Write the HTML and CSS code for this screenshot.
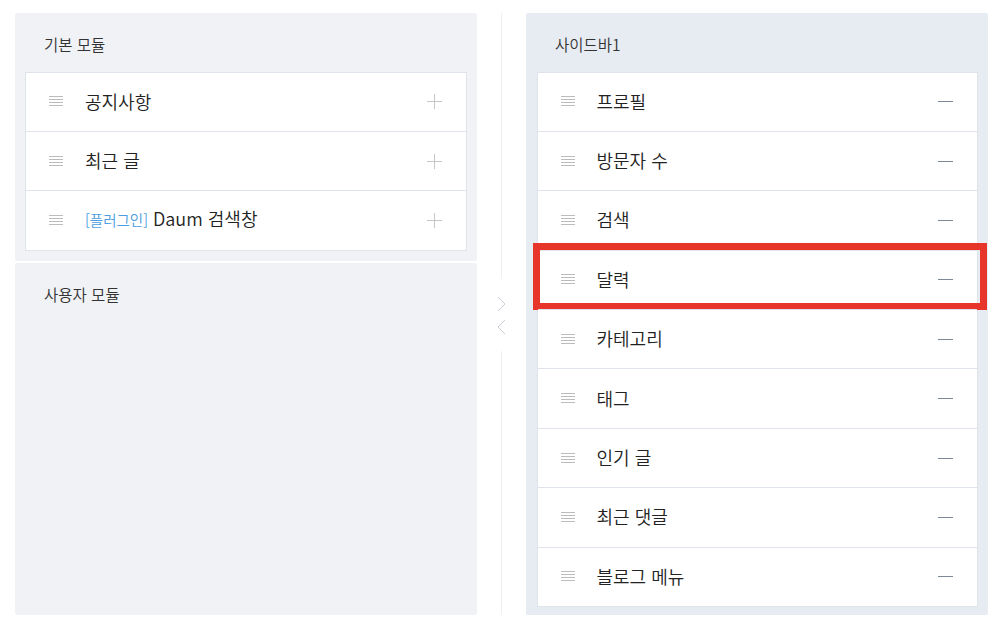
FILE: index.html
```html
<!DOCTYPE html>
<html lang="ko">
<head>
<meta charset="utf-8">
<link rel="stylesheet" href="styles.css">
</head>
<body>
<div class="layout">
  <div class="left-col">
    <section class="panel panel-basic">
      <h2 class="panel-title">기본 모듈</h2>
      <ul class="list">
        <li class="item"><span class="drag"><svg width="14" height="11" viewBox="0 0 14 11"><path d="M0 .5h14M0 3.5h14M0 6.5h14M0 9.5h14" stroke="#bcbcbc" stroke-width="1"/></svg></span><span class="label">공지사항</span><span class="plus"></span></li>
        <li class="item"><span class="drag"><svg width="14" height="11" viewBox="0 0 14 11"><path d="M0 .5h14M0 3.5h14M0 6.5h14M0 9.5h14" stroke="#bcbcbc" stroke-width="1"/></svg></span><span class="label">최근 글</span><span class="plus"></span></li>
        <li class="item"><span class="drag"><svg width="14" height="11" viewBox="0 0 14 11"><path d="M0 .5h14M0 3.5h14M0 6.5h14M0 9.5h14" stroke="#bcbcbc" stroke-width="1"/></svg></span><span class="label"><span class="tag">[플러그인]</span> Daum 검색창</span><span class="plus"></span></li>
      </ul>
    </section>
    <section class="panel panel-user">
      <h2 class="panel-title">사용자 모듈</h2>
    </section>
  </div>
  <div class="divider">
    <div class="vline top"></div>
    <div class="arrows">
      <svg width="9" height="16" viewBox="0 0 9 16"><path d="M1 1l7 7-7 7" fill="none" stroke="#c9cdd6" stroke-width="1"/></svg>
      <svg width="9" height="16" viewBox="0 0 9 16"><path d="M8 1L1 8l7 7" fill="none" stroke="#c9cdd6" stroke-width="1"/></svg>
    </div>
    <div class="vline bottom"></div>
  </div>
  <section class="panel panel-side">
    <h2 class="panel-title">사이드바1</h2>
    <ul class="list">
      <li class="item"><span class="drag"><svg width="14" height="11" viewBox="0 0 14 11"><path d="M0 .5h14M0 3.5h14M0 6.5h14M0 9.5h14" stroke="#bcbcbc" stroke-width="1"/></svg></span><span class="label">프로필</span><span class="minus"></span></li>
      <li class="item"><span class="drag"><svg width="14" height="11" viewBox="0 0 14 11"><path d="M0 .5h14M0 3.5h14M0 6.5h14M0 9.5h14" stroke="#bcbcbc" stroke-width="1"/></svg></span><span class="label">방문자 수</span><span class="minus"></span></li>
      <li class="item"><span class="drag"><svg width="14" height="11" viewBox="0 0 14 11"><path d="M0 .5h14M0 3.5h14M0 6.5h14M0 9.5h14" stroke="#bcbcbc" stroke-width="1"/></svg></span><span class="label">검색</span><span class="minus"></span></li>
      <li class="item highlighted"><span class="drag"><svg width="14" height="11" viewBox="0 0 14 11"><path d="M0 .5h14M0 3.5h14M0 6.5h14M0 9.5h14" stroke="#bcbcbc" stroke-width="1"/></svg></span><span class="label">달력</span><span class="minus"></span><span class="highlight-box"></span></li>
      <li class="item"><span class="drag"><svg width="14" height="11" viewBox="0 0 14 11"><path d="M0 .5h14M0 3.5h14M0 6.5h14M0 9.5h14" stroke="#bcbcbc" stroke-width="1"/></svg></span><span class="label">카테고리</span><span class="minus"></span></li>
      <li class="item"><span class="drag"><svg width="14" height="11" viewBox="0 0 14 11"><path d="M0 .5h14M0 3.5h14M0 6.5h14M0 9.5h14" stroke="#bcbcbc" stroke-width="1"/></svg></span><span class="label">태그</span><span class="minus"></span></li>
      <li class="item"><span class="drag"><svg width="14" height="11" viewBox="0 0 14 11"><path d="M0 .5h14M0 3.5h14M0 6.5h14M0 9.5h14" stroke="#bcbcbc" stroke-width="1"/></svg></span><span class="label">인기 글</span><span class="minus"></span></li>
      <li class="item"><span class="drag"><svg width="14" height="11" viewBox="0 0 14 11"><path d="M0 .5h14M0 3.5h14M0 6.5h14M0 9.5h14" stroke="#bcbcbc" stroke-width="1"/></svg></span><span class="label">최근 댓글</span><span class="minus"></span></li>
      <li class="item"><span class="drag"><svg width="14" height="11" viewBox="0 0 14 11"><path d="M0 .5h14M0 3.5h14M0 6.5h14M0 9.5h14" stroke="#bcbcbc" stroke-width="1"/></svg></span><span class="label">블로그 메뉴</span><span class="minus"></span></li>
    </ul>
  </section>
</div>
</body>
</html>
```
FILE: styles.css
```css
* { box-sizing: border-box; }
html, body { margin: 0; padding: 0; background: #fff; }
body {
  font-family: "Noto Sans CJK KR", "Noto Sans", sans-serif;
  color: #222;
  width: 1006px;
  height: 630px;
  overflow: hidden;
}
.layout {
  display: flex;
  padding: 13px 18px 15px 15px;
  height: 630px;
}
.left-col {
  width: 462px;
  display: flex;
  flex-direction: column;
  gap: 2px;
}
.panel {
  border-radius: 2px;
  padding: 0 10px;
}
.panel-basic { background: #f1f2f6; padding-bottom: 10px; }
.panel-user { background: #f1f2f6; flex: 1; }
.panel-side { background: #e7ebf2; width: 462px; padding: 0 10px 0 10.5px; }
.panel-title {
  margin: 0;
  height: 58.5px;
  padding: 21px 0 0 19px;
  font-size: 15.5px;
  font-weight: 350;
  line-height: 20px;
  color: #333;
}
.panel-side .panel-title { padding-left: 18.5px; }
.list {
  list-style: none;
  margin: 0;
  padding: 0;
  background: #fff;
  border: 1px solid #dfe3ea;
}
.item {
  position: relative;
  display: flex;
  align-items: center;
  height: 59.4px;
  padding: 0 24px 0 23px;
  border-top: 1px solid #dfe3ea;
}
.item:first-child { border-top: 0; height: 58.4px; }
.drag { width: 14px; height: 11px; display: flex; margin-right: 22px; }
.drag svg { display: block; }
.label {
  flex: 1;
  font-size: 18px;
  font-weight: 350;
  line-height: 22px;
  padding-bottom: 2px;
  color: #222;
}
.tag { color: #4a9de0; font-size: 14.5px; }
.plus {
  position: relative;
  width: 15px;
  height: 15px;
}
.plus::before, .plus::after {
  content: "";
  position: absolute;
  background: #c6c6c6;
}
.plus::before { left: 7px; top: 0; width: 1px; height: 15px; }
.plus::after { top: 7px; left: 0; width: 15px; height: 1px; }
.minus {
  width: 15px;
  height: 1px;
  background: #7f8898;
}
.highlight-box {
  position: absolute;
  top: -8px;
  left: -5px;
  right: -10px;
  bottom: -1px;
  border: 7px solid #e8352a;
  pointer-events: none;
}
.divider {
  width: 49px;
  display: flex;
  flex-direction: column;
  align-items: center;
}
.vline { width: 1px; background: #eceef3; }
.vline.top { height: 266px; }
.vline.bottom { flex: 1; }
.arrows {
  height: 72px;
  display: flex;
  flex-direction: column;
  align-items: center;
  justify-content: center;
  gap: 7px;
}
```
